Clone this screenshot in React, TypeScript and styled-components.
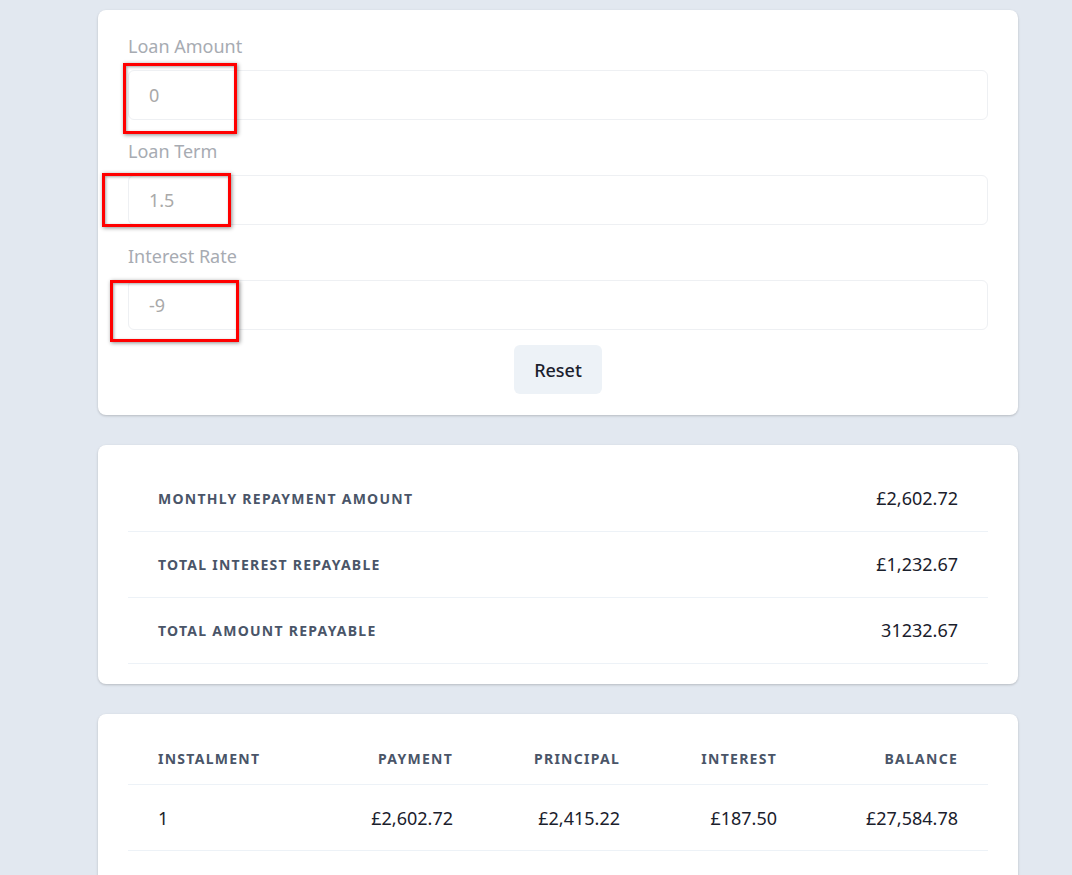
import React from "react";
import styled, { createGlobalStyle } from "styled-components";

const GlobalStyle = createGlobalStyle`
  html, body { margin: 0; padding: 0; background: #e2e8f0; }
  body { font-family: "Noto Sans", "Open Sans", sans-serif; color: #1a202c; }
  * { box-sizing: border-box; }
`;

const Page = styled.div`
  padding: 10px 0 40px 98px;
  display: flex;
  flex-direction: column;
  gap: 30px;
`;

const Card = styled.section<{ $pad?: string }>`
  position: relative;
  width: 920px;
  background: #ffffff;
  border-radius: 8px;
  box-shadow: 0 1px 3px rgba(0, 0, 0, 0.12), 0 1px 2px rgba(0, 0, 0, 0.08);
  padding: ${(p) => p.$pad || "20px 30px"};
`;

const Form = styled.form`
  display: flex;
  flex-direction: column;
`;

const Label = styled.label`
  display: block;
  font-size: 18px;
  line-height: 27px;
  color: #a7abb2;
  margin-bottom: 10px;
`;

const Field = styled.div<{ $last?: boolean }>`
  display: flex;
  flex-direction: column;
  margin-bottom: ${(p) => (p.$last ? "15px" : "18px")};
`;

const Input = styled.input`
  width: 100%;
  height: 50px;
  border: 1px solid #eef0f3;
  border-radius: 6px;
  padding: 0 20px;
  font-family: inherit;
  font-size: 18px;
  color: #a9a9a9;
  background: #fff;
  outline: none;
`;

const ButtonRow = styled.div`
  display: flex;
  justify-content: center;
`;

const Button = styled.button`
  height: 49px;
  padding: 0 20px;
  border: none;
  border-radius: 6px;
  background: #edf2f7;
  color: #1a202c;
  font-family: inherit;
  font-size: 18px;
  font-weight: 500;
`;

const Highlight = styled.div<{ $l: number; $t: number; $w: number; $h: number }>`
  position: absolute;
  left: ${(p) => p.$l}px;
  top: ${(p) => p.$t}px;
  width: ${(p) => p.$w}px;
  height: ${(p) => p.$h}px;
  border: 3px solid #ff0000;
  box-shadow: 1px 1px 4px rgba(0, 0, 0, 0.45), inset 1px 1px 3px rgba(0, 0, 0, 0.35);
  pointer-events: none;
`;

const Table = styled.table`
  width: 100%;
  border-collapse: collapse;
  table-layout: fixed;
`;

const Row = styled.tr`
  border-bottom: 1px solid #edf2f7;
`;

const Th = styled.th<{ $align?: string; $w?: number }>`
  text-align: ${(p) => p.$align || "left"};
  width: ${(p) => (p.$w ? `${p.$w}px` : "auto")};
  padding: 16px 30px 17px;
  font-size: 14px;
  line-height: 17px;
  font-weight: 700;
  letter-spacing: 0.09em;
  text-transform: uppercase;
  color: #4a5568;
`;

const HeadTh = styled(Th)`
  padding: 19px 30px;
  line-height: 27px;
`;

const Td = styled.td<{ $align?: string }>`
  text-align: ${(p) => p.$align || "left"};
  padding: 19px 30px;
  font-size: 18px;
  line-height: 27px;
  color: #1a202c;
`;

const BodyTd = styled(Td)`
  padding: 20px 30px 18px;
`;

const summary = [
  ["Monthly Repayment Amount", "£2,602.72"],
  ["Total Interest Repayable", "£1,232.67"],
  ["Total Amount Repayable", "31232.67"],
];

const schedule = [
  ["1", "£2,602.72", "£2,415.22", "£187.50", "£27,584.78"],
  ["2", "£2,602.72", "£2,433.33", "£169.39", "£25,151.45"],
];

export default function App() {
  return (
    <>
      <GlobalStyle />
      <Page>
        <Card $pad="23px 30px 21px">
          <Form onSubmit={(e) => e.preventDefault()}>
            <Field>
              <Label>Loan Amount</Label>
              <Input defaultValue="0" />
            </Field>
            <Field>
              <Label>Loan Term</Label>
              <Input defaultValue="1.5" />
            </Field>
            <Field $last>
              <Label>Interest Rate</Label>
              <Input defaultValue="-9" />
            </Field>
            <ButtonRow>
              <Button type="button">Reset</Button>
            </ButtonRow>
          </Form>
          <Highlight $l={25} $t={53} $w={114} $h={71} />
          <Highlight $l={4} $t={163} $w={129} $h={54} />
          <Highlight $l={12} $t={270} $w={129} $h={62} />
        </Card>

        <Card $pad="21px 30px 20px">
          <Table>
            <tbody>
              {summary.map(([k, v]) => (
                <Row key={k}>
                  <HeadTh>{k}</HeadTh>
                  <Td $align="right">{v}</Td>
                </Row>
              ))}
            </tbody>
          </Table>
        </Card>

        <Card>
          <Table>
            <thead>
              <Row>
                <Th $w={202}>Instalment</Th>
                <Th $w={153} $align="right">Payment</Th>
                <Th $w={167} $align="right">Principal</Th>
                <Th $w={157} $align="right">Interest</Th>
                <Th $w={181} $align="right">Balance</Th>
              </Row>
            </thead>
            <tbody>
              {schedule.map((r) => (
                <Row key={r[0]}>
                  <BodyTd>{r[0]}</BodyTd>
                  <BodyTd $align="right">{r[1]}</BodyTd>
                  <BodyTd $align="right">{r[2]}</BodyTd>
                  <BodyTd $align="right">{r[3]}</BodyTd>
                  <BodyTd $align="right">{r[4]}</BodyTd>
                </Row>
              ))}
            </tbody>
          </Table>
        </Card>
      </Page>
    </>
  );
}
